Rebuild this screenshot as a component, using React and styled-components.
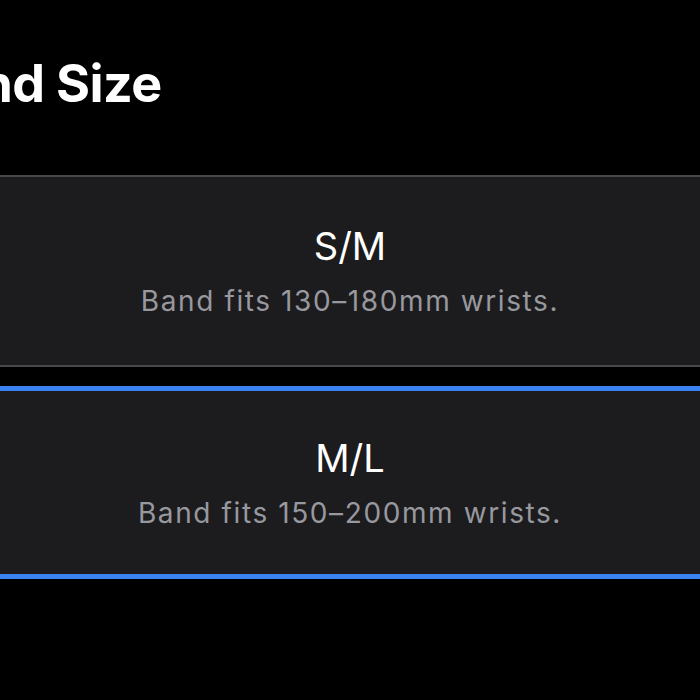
import React from 'react'
import styled, { createGlobalStyle } from 'styled-components'

const Global = createGlobalStyle`
  html, body {
    margin: 0;
    padding: 0;
    background: #000;
    overflow: hidden;
  }
  body {
    font-family: Inter, "Noto Sans", "Liberation Sans", sans-serif;
    -webkit-font-smoothing: antialiased;
  }
`

const sizes = [
  { id: 'sm', label: 'S/M', fits: 'Band fits 130–180mm wrists.', selected: false },
  { id: 'ml', label: 'M/L', fits: 'Band fits 150–200mm wrists.', selected: true },
]

const App = () => {
  return (
    <>
      <Global />
      <Page>
        <Heading>Band Size</Heading>
        <List>
          {sizes.map(s => (
            <Option key={s.id} $selected={s.selected}>
              <Label>{s.label}</Label>
              <Fits>{s.fits}</Fits>
            </Option>
          ))}
        </List>
      </Page>
    </>
  )
}

export default App

const Page = styled.div`
  width: 700px;
  height: 700px;
  padding-top: 52px;
  box-sizing: border-box;
  overflow: hidden;
`

const Heading = styled.h1`
  margin: 0 0 0 -83px;
  font-size: 52px;
  line-height: 64px;
  font-weight: 700;
  color: #fff;
  letter-spacing: -0.6px;
  white-space: nowrap;
`

const List = styled.div`
  display: flex;
  flex-direction: column;
  gap: 19px;
  margin: 59px -20px 0;
`

const Option = styled.div`
  height: ${p => (p.$selected ? '193px' : '192px')};
  box-sizing: border-box;
  border: ${p => (p.$selected ? '5px solid #3a82f1' : '2px solid #48484a')};
  background: #1c1c1e;
  display: flex;
  flex-direction: column;
  align-items: center;
  justify-content: center;
  gap: 16px;
`

const Label = styled.div`
  font-size: 38px;
  line-height: 44px;
  color: #fff;
`

const Fits = styled.div`
  font-size: 28px;
  line-height: 34px;
  color: #98989f;
  letter-spacing: 1.6px;
`
